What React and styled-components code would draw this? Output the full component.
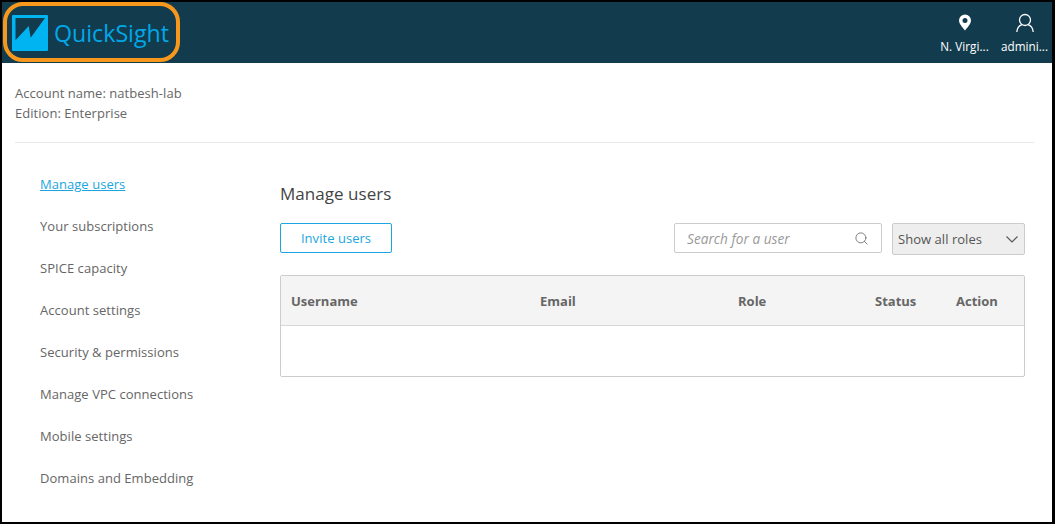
import React from "react";
import styled, { createGlobalStyle } from "styled-components";
import { Search } from "lucide-react";

const GlobalStyle = createGlobalStyle`
  html, body {
    margin: 0;
    padding: 0;
    background: #fff;
  }
  * {
    box-sizing: border-box;
  }
`;

const Frame = styled.div`
  width: 1055px;
  height: 524px;
  border: 2px solid #000;
  border-right-width: 3px;
  background: #fff;
  font-family: "Open Sans", "Noto Sans", sans-serif;
  font-size: 13px;
  letter-spacing: 0.04px;
  color: #666;
  overflow: hidden;
`;

const Header = styled.header`
  position: relative;
  height: 61px;
  background: #123c4e;
  display: flex;
  align-items: center;
  justify-content: space-between;
`;

const Brand = styled.div`
  display: flex;
  align-items: center;
  gap: 6px;
  padding-left: 10px;
  color: #00a8e8;
  font-size: 23.2px;
  letter-spacing: 0;
  line-height: 1;
`;

const BrandName = styled.span`
  padding-top: 2px;
`;

const Highlight = styled.div`
  position: absolute;
  left: 1px;
  top: 0;
  width: 177px;
  height: 60px;
  border: 4px solid #f7981d;
  border-radius: 20px;
`;

const HeaderActions = styled.div`
  display: flex;
  padding-right: 3px;
  gap: 11px;
`;

const HeaderItem = styled.div`
  width: 49px;
  display: flex;
  flex-direction: column;
  align-items: center;
  gap: 5px;
  color: #fff;
  font-size: 11.7px;
  line-height: 14px;
  white-space: nowrap;
`;

const HeaderIcon = styled.svg`
  display: block;
  width: 22px;
  height: 22px;
`;

const Account = styled.section`
  margin: 0 18px 0 13px;
  padding: 20px 0 19px;
  border-bottom: 1px solid #eaeaea;
  line-height: 20px;
`;

const Body = styled.div`
  display: flex;
`;

const Sidebar = styled.nav`
  width: 278px;
  padding: 31px 0 0 38px;
  display: flex;
  flex-direction: column;
  gap: 22px;
`;

const NavItem = styled.a`
  height: 20px;
  line-height: 20px;
  color: ${(p) => (p.$active ? "#1ba6e0" : "#666")};
  text-decoration: ${(p) => (p.$active ? "underline" : "none")};
`;

const Main = styled.main`
  width: 745px;
  padding-top: 39px;
`;

const Title = styled.h1`
  margin: 0 0 17px;
  font-size: 17px;
  font-weight: 400;
  line-height: 24px;
  color: #444;
`;

const Toolbar = styled.div`
  display: flex;
  align-items: flex-start;
  margin-bottom: 20px;
`;

const InviteButton = styled.button`
  width: 112px;
  height: 30px;
  padding: 0;
  background: #fff;
  border: 1px solid #1ba6e0;
  border-radius: 2px;
  color: #1ba6e0;
  font: inherit;
  letter-spacing: inherit;
`;

const SearchBox = styled.div`
  margin-left: auto;
  width: 208px;
  height: 30px;
  padding: 0 12px;
  display: flex;
  align-items: center;
  justify-content: space-between;
  border: 1px solid #ccc;
  border-radius: 2px;
  color: #999;
  font-size: 13.6px;
  font-style: italic;
`;

const RoleSelect = styled.div`
  margin-left: 10px;
  width: 133px;
  height: 32px;
  padding: 0 6px 0 5px;
  display: flex;
  align-items: center;
  justify-content: space-between;
  background: #eee;
  border: 1px solid #ccc;
  border-radius: 2px;
  color: #555;
`;

const Table = styled.div`
  border: 1px solid #ccc;
  border-radius: 2px;
  height: 102px;
`;

const TableHead = styled.div`
  height: 50px;
  display: grid;
  grid-template-columns: 249px 198px 137px 81px 1fr;
  align-items: center;
  padding-left: 10px;
  background: #f4f4f4;
  border-bottom: 1px solid #d8d8d8;
  font-weight: 700;
  letter-spacing: 0;
  color: #666;
`;

const nav = [
  "Manage users",
  "Your subscriptions",
  "SPICE capacity",
  "Account settings",
  "Security & permissions",
  "Manage VPC connections",
  "Mobile settings",
  "Domains and Embedding",
];

const columns = ["Username", "Email", "Role", "Status", "Action"];

const Logo = () => (
  <svg width="36" height="36" viewBox="0 0 36 36" aria-hidden="true">
    <rect width="36" height="36" rx="1" fill="#00b4f1" />
    <path d="M3.500 3H33L18.700 22.700L16.700 11L3.500 25.300Z" fill="#123c4e" />
  </svg>
);

export default function App() {
  return (
    <>
      <GlobalStyle />
      <Frame>
        <Header>
          <Brand>
            <Logo />
            <BrandName>QuickSight</BrandName>
          </Brand>
          <Highlight />
          <HeaderActions>
            <HeaderItem>
              <HeaderIcon viewBox="0 0 22 22">
                <path
                  fillRule="evenodd"
                  fill="#fff"
                  d="M11 2.500a6 6 0 0 0-6 6c0 3.600 4 7.400 6 10 2-2.600 6-6.400 6-10a6 6 0 0 0-6-6Zm0 3.500a2.500 2.500 0 1 1 0 5 2.500 2.500 0 0 1 0-5Z"
                />
              </HeaderIcon>
              N. Virgi...
            </HeaderItem>
            <HeaderItem>
              <HeaderIcon viewBox="0 0 22 22" fill="none" stroke="#fff" strokeWidth="1.300">
                <circle cx="11" cy="8" r="5.500" />
                <path d="M2.800 20c.4-4 2.700-6.500 5.200-7.300M19.200 20c-.4-4-2.700-6.500-5.200-7.300" />
              </HeaderIcon>
              admini...
            </HeaderItem>
          </HeaderActions>
        </Header>
        <Account>
          <div>Account name: natbesh-lab</div>
          <div>Edition: Enterprise</div>
        </Account>
        <Body>
          <Sidebar>
            {nav.map((item, i) => (
              <NavItem key={item} $active={i === 0}>
                {item}
              </NavItem>
            ))}
          </Sidebar>
          <Main>
            <Title>Manage users</Title>
            <Toolbar>
              <InviteButton>Invite users</InviteButton>
              <SearchBox>
                Search for a user
                <Search size={15} color="#666" strokeWidth={1.300} />
              </SearchBox>
              <RoleSelect>
                Show all roles
                <svg width="12" height="7" viewBox="0 0 12 7" fill="none" stroke="#555" strokeWidth="1.100">
                  <path d="M.5.500 6 6 11.500.500" />
                </svg>
              </RoleSelect>
            </Toolbar>
            <Table>
              <TableHead>
                {columns.map((c) => (
                  <div key={c}>{c}</div>
                ))}
              </TableHead>
            </Table>
          </Main>
        </Body>
      </Frame>
    </>
  );
}
